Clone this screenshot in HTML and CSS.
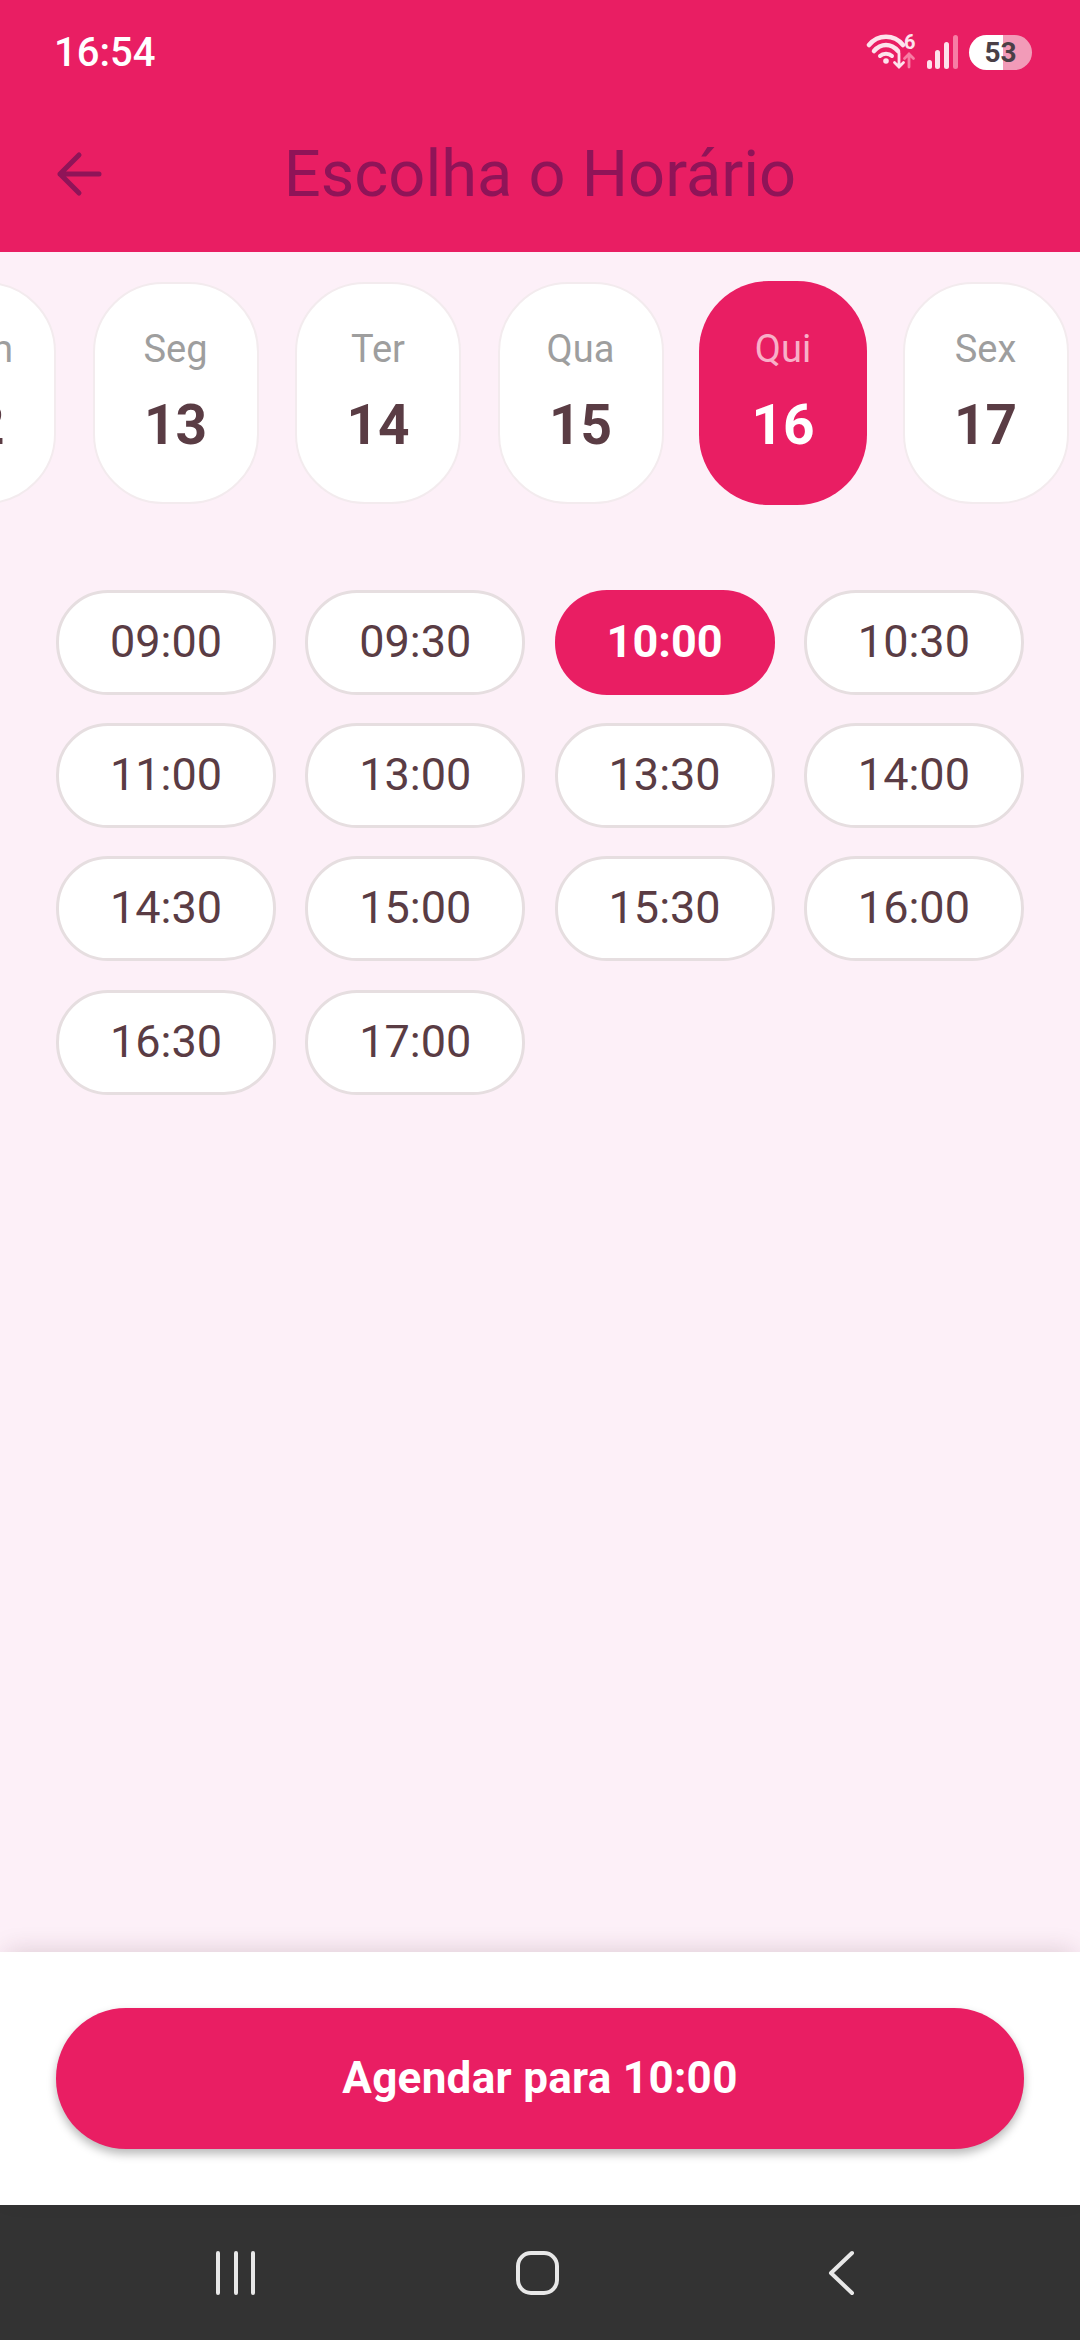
FILE: index.html
```html
<!DOCTYPE html>
<html lang="pt">
<head>
<meta charset="UTF-8" />
<title>Escolha o Horário</title>
<link rel="stylesheet" href="styles.css">
</head>
<body>

<div class="screen">
    <!-- header -->
    <header class="top">
        <div class="status">
            <span class="clock">16:54</span>
            <div class="status-icons">
                <svg class="wifi" width="52" height="36" viewBox="0 0 52 36" fill="none" stroke="#fde3ec" stroke-linecap="round">
                    <path d="M3 11 C12 0 28 0 37 11" stroke-width="4.5"/>
                    <path d="M8 17 C15 9 25 9 32 17" stroke-width="4.5"/>
                    <path d="M14 22 C17 19 23 19 26 22" stroke-width="4"/>
                    <circle cx="20" cy="27" r="2.8" fill="#fde3ec" stroke="none"/>
                    <path d="M33 19 V33 M28.5 28.5 L33 33 L37.5 28.5" stroke-width="2.8"/>
                    <path d="M43 33 V20 M38.5 24.5 L43 20 L47.5 24.5" stroke="#f77da4" stroke-width="2.8"/>
                    <text x="38" y="15" class="wifi-num">6</text>
                </svg>
                <svg class="signal" width="32" height="34" viewBox="0 0 32 34" fill="#fde3ec">
                    <rect x="0" y="25" width="5" height="9" rx="2.5"/>
                    <rect x="8" y="15" width="5" height="19" rx="2.5"/>
                    <rect x="17" y="7" width="5" height="27" rx="2.5"/>
                    <rect x="26" y="0" width="5" height="34" rx="2.5" fill="#f77da4"/>
                </svg>
                <span class="battery">53</span>
            </div>
        </div>
        <div class="appbar">
            <svg class="back" width="48" height="48" viewBox="0 0 48 48" fill="none" stroke="#8f1458" stroke-width="5" stroke-linecap="round" stroke-linejoin="round">
                <path d="M43 24 H4 M23 5 L4 24 L23 43"/>
            </svg>
            <h1>Escolha o Horário</h1>
        </div>
    </header>

    <!-- day picker + slots -->
    <main class="content">
        <div class="days">
            <div class="day"><span class="day-name">Dom</span><span class="day-num">12</span></div>
            <div class="day"><span class="day-name">Seg</span><span class="day-num">13</span></div>
            <div class="day"><span class="day-name">Ter</span><span class="day-num">14</span></div>
            <div class="day"><span class="day-name">Qua</span><span class="day-num">15</span></div>
            <div class="day active"><span class="day-name">Qui</span><span class="day-num">16</span></div>
            <div class="day"><span class="day-name">Sex</span><span class="day-num">17</span></div>
        </div>

        <div class="slots">
            <div class="slot">09:00</div>
            <div class="slot">09:30</div>
            <div class="slot active">10:00</div>
            <div class="slot">10:30</div>
            <div class="slot">11:00</div>
            <div class="slot">13:00</div>
            <div class="slot">13:30</div>
            <div class="slot">14:00</div>
            <div class="slot">14:30</div>
            <div class="slot">15:00</div>
            <div class="slot">15:30</div>
            <div class="slot">16:00</div>
            <div class="slot">16:30</div>
            <div class="slot">17:00</div>
        </div>
    </main>

    <!-- confirm -->
    <footer class="confirm">
        <button class="book">Agendar para 10:00</button>
    </footer>

    <!-- android nav -->
    <nav class="navbar">
        <svg width="44" height="46" viewBox="0 0 44 46" fill="none" stroke="#e8e8e8" stroke-width="4" stroke-linecap="round">
            <path d="M4 3 V43 M22 3 V43 M39 3 V43"/>
        </svg>
        <svg class="home" width="46" height="46" viewBox="0 0 46 46" fill="none" stroke="#e8e8e8" stroke-width="4">
            <rect x="2" y="3" width="39" height="40" rx="13"/>
        </svg>
        <svg width="30" height="46" viewBox="0 0 30 46" fill="none" stroke="#e8e8e8" stroke-width="4" stroke-linecap="round" stroke-linejoin="round">
            <path d="M26 3 L5 23 L26 43"/>
        </svg>
    </nav>
</div>

</body>
</html>
```

FILE: styles.css
```css
/* --- Layout --------------------------------------------------------- */
*{ box-sizing:border-box; }
body{
    margin:0;
    font-family:Roboto,"Noto Sans",sans-serif;
    background:#fdf0f8;
    overflow:hidden;
}
.screen{
    width:1080px;
    height:2340px;
    display:flex;
    flex-direction:column;
    overflow:hidden;
}

/* --- Header --------------------------------------------------------- */
.top{
    background:#e91e63;
    height:252px;
    flex-shrink:0;
}
.status{
    height:104px;
    padding:0 48px 0 54px;
    display:flex;
    align-items:center;
    justify-content:space-between;
}
.clock{
    font-size:40px;
    font-weight:500;
    color:#fff;
}
.status-icons{
    display:flex;
    align-items:center;
}
.wifi{ margin-right:9px; }
.signal{ margin-right:10px; }
.wifi-num{
    font-family:Roboto,sans-serif;
    font-size:20px;
    font-weight:700;
    fill:#fde3ec;
    stroke:none;
}
.battery{
    width:63px;
    height:35px;
    border-radius:18px;
    background:linear-gradient(90deg,#fff 54%,#f29bb8 54%);
    color:#4a3f46;
    font-size:28px;
    font-weight:700;
    display:flex;
    align-items:center;
    justify-content:center;
}
.appbar{
    height:148px;
    padding:0 56px 8px;
    display:grid;
    grid-template-columns:1fr auto 1fr;
    align-items:center;
}
.appbar h1{
    margin:0;
    font-size:65px;
    font-weight:400;
    color:#8f1458;
}

/* --- Day picker ----------------------------------------------------- */
.content{
    flex:1;
    padding-top:29px;
}
.days{
    display:flex;
    gap:34.5px;
    margin-left:-111px;
    width:1400px;
}
.day{
    flex:none;
    width:166px;
    height:222px;
    margin:1px;
    border:2px solid #f3ebee;
    border-radius:70px;
    background:#fff;
    display:flex;
    flex-direction:column;
    align-items:center;
    padding-top:43px;
}
.day-name{
    font-size:38px;
    line-height:44px;
    color:#9e9e9e;
}
.day-num{
    margin-top:19px;
    font-size:55px;
    line-height:70px;
    font-weight:700;
    color:#5a3c44;
}
.day.active{
    width:168px;
    height:224px;
    margin:0;
    border:none;
    background:#e91e63;
    padding-top:46px;
}
.day.active .day-name{ color:#f8b0c8; }
.day.active .day-num{ color:#fff; }

/* --- Time slots ----------------------------------------------------- */
.slots{
    display:grid;
    grid-template-columns:repeat(4,220px);
    grid-auto-rows:105px;
    column-gap:29.3px;
    row-gap:28.2px;
    padding:0 56px;
    margin-top:85px;
}
.slot{
    border:3px solid #e6dee0;
    border-radius:52px;
    background:#fff;
    color:#5a3c44;
    font-size:45px;
    padding-bottom:2px;
    display:flex;
    align-items:center;
    justify-content:center;
}
.slot.active{
    border:none;
    background:#e91e63;
    color:#fff;
    font-weight:700;
}

/* --- Confirm button ------------------------------------------------- */
.confirm{
    flex-shrink:0;
    height:253px;
    padding:56px;
    background:#fff;
    box-shadow:0 -6px 24px -6px rgba(60,20,40,.18);
    position:relative;
}
.book{
    display:block;
    width:100%;
    height:141px;
    border:none;
    border-radius:70px;
    background:#e91e63;
    color:#fff;
    font-family:inherit;
    font-size:44px;
    letter-spacing:.3px;
    font-weight:700;
    padding-bottom:3px;
    box-shadow:0 5px 10px rgba(0,0,0,.28);
}

/* --- Navigation bar ------------------------------------------------- */
.navbar{
    flex-shrink:0;
    height:135px;
    background:#333;
    padding:0 224px 0 214px;
    display:flex;
    align-items:center;
    justify-content:space-between;
}
.home{ margin-right:6px; }
```
